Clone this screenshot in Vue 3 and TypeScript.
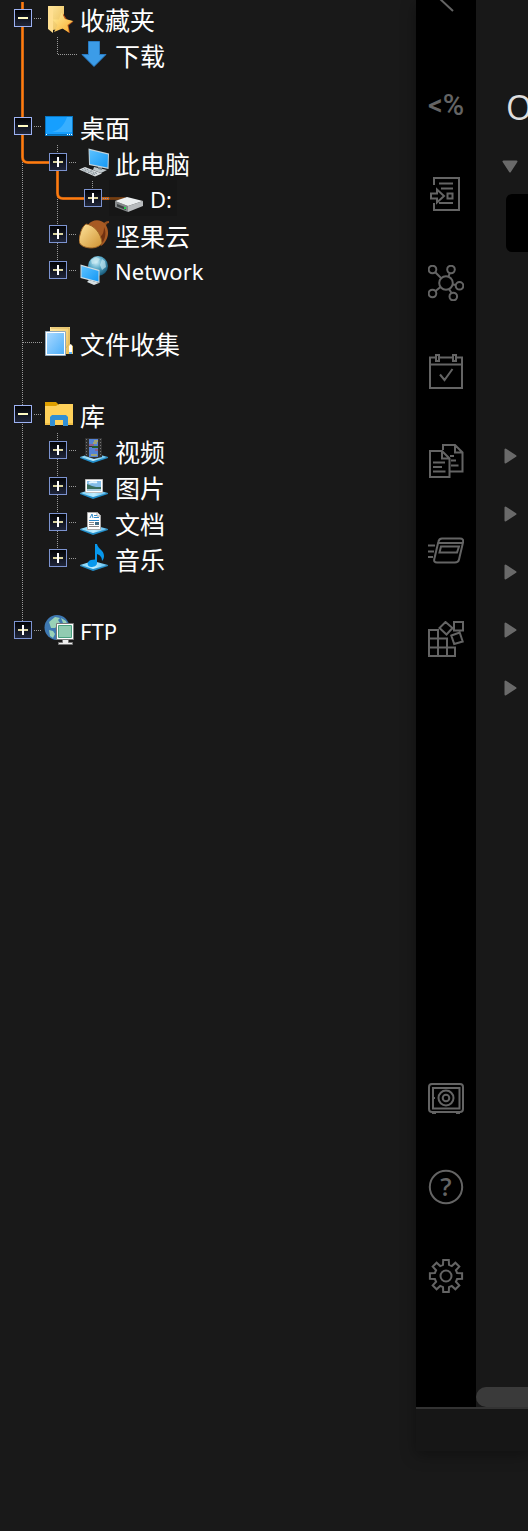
<script setup lang="ts">
interface TreeRow {
  label: string
  icon: string
  level: number
  state?: 'open' | 'closed'
  gap?: boolean
  selected?: boolean
  latin?: boolean
}

const rows: TreeRow[] = [
  { label: '收藏夹', icon: 'favorites', level: 0, state: 'open' },
  { label: '下载', icon: 'download', level: 1 },
  { label: '桌面', icon: 'desktop', level: 0, state: 'open', gap: true },
  { label: '此电脑', icon: 'computer', level: 1, state: 'closed' },
  { label: 'D:', icon: 'drive', level: 2, state: 'closed', selected: true, latin: true },
  { label: '坚果云', icon: 'acorn', level: 1, state: 'closed' },
  { label: 'Network', icon: 'network', level: 1, state: 'closed', latin: true },
  { label: '文件收集', icon: 'collection', level: 0, gap: true },
  { label: '库', icon: 'library', level: 0, state: 'open', gap: true },
  { label: '视频', icon: 'video', level: 1, state: 'closed' },
  { label: '图片', icon: 'picture', level: 1, state: 'closed' },
  { label: '文档', icon: 'document', level: 1, state: 'closed' },
  { label: '音乐', icon: 'music', level: 1, state: 'closed' },
  { label: 'FTP', icon: 'ftp', level: 0, state: 'closed', gap: true, latin: true },
]

const topTools = [
  { id: 'chevron', name: 'Collapse' },
  { id: 'snippet', name: 'Snippets' },
  { id: 'import', name: 'Import' },
  { id: 'graph', name: 'Graph' },
  { id: 'calendar', name: 'Daily note' },
  { id: 'templates', name: 'Templates' },
  { id: 'cards', name: 'Cards' },
  { id: 'blocks', name: 'Blocks' },
]
const bottomTools = [
  { id: 'vault', name: 'Vault' },
  { id: 'help', name: 'Help' },
  { id: 'gear', name: 'Settings' },
]

const gearPoints = (() => {
  const points: string[] = []
  for (let i = 0; i < 8; i++) {
    const mid = (i * Math.PI) / 4 - Math.PI / 2
    const corners: [number, number][] = [[11.5, -0.26], [16.3, -0.17], [16.3, 0.17], [11.5, 0.26]]
    for (const [r, a] of corners) {
      points.push(`${(18 + r * Math.cos(mid + a)).toFixed(1)},${(18 + r * Math.sin(mid + a)).toFixed(1)}`)
    }
  }
  return points.join(' ')
})()
</script>

<template>
  <svg class="defs" aria-hidden="true">
    <defs>
      <linearGradient id="g-folder" x1="0" y1="0" x2="1" y2="1"><stop offset="0" stop-color="#ffe7a0" /><stop offset="1" stop-color="#e9bd55" /></linearGradient>
      <linearGradient id="g-star" x1="0" y1="0" x2="1" y2="1"><stop offset="0" stop-color="#fff0a0" /><stop offset="1" stop-color="#f7ab2c" /></linearGradient>
      <linearGradient id="g-screen" x1="0" y1="0" x2="1" y2="1"><stop offset="0" stop-color="#5cc2ff" /><stop offset="1" stop-color="#1598f5" /></linearGradient>
      <linearGradient id="g-paper" x1="0" y1="0" x2="1" y2="1"><stop offset="0" stop-color="#a8d8ff" /><stop offset="1" stop-color="#4eb0fa" /></linearGradient>
      <linearGradient id="g-acorn" x1="0" y1="0" x2="1" y2="1"><stop offset="0" stop-color="#ffe49b" /><stop offset="1" stop-color="#cf9232" /></linearGradient>
      <radialGradient id="g-globe" cx=".4" cy=".3" r=".7"><stop offset="0" stop-color="#d4f2fb" /><stop offset=".5" stop-color="#58a9c8" /><stop offset="1" stop-color="#175979" /></radialGradient>
      <linearGradient id="g-base" x1="0" y1="0" x2="1" y2="0"><stop offset="0" stop-color="#72cdf6" /><stop offset=".5" stop-color="#c1eeff" /><stop offset="1" stop-color="#48b4ee" /></linearGradient>
    </defs>
    <symbol id="i-base" viewBox="0 0 30 30">
      <path d="M1 22v1l13 5 15-5v-1l-15 3z" fill="#218dc9" />
      <path d="M1 22l13-4 15 4-15 4z" fill="url(#g-base)" />
    </symbol>
    <symbol id="i-favorites" viewBox="0 0 30 30">
      <path d="M4 3h16v22l-11 2z" fill="url(#g-folder)" />
      <path d="M4 3l5 3v24l-5-4z" fill="#ffdf91" />
      <path d="M19 10.500l4 6 6.500 2-5 4 1.500 8-7-5z" fill="#b5521a" />
      <path d="M17.500 9.500l3.500 6.500 8 2-5.500 4 1.500 7.500-6.500-4L10 29l3.500-7-5-5.500h6.500z" fill="url(#g-star)" />
    </symbol>
    <symbol id="i-download" viewBox="0 0 30 30">
      <path d="M9.500 2.500h11v13h6.500l-12 12-12-12h6.500z" fill="#3c9ce8" stroke="#2a7cc4" />
    </symbol>
    <symbol id="i-desktop" viewBox="0 0 30 30">
      <rect x="1.500" y="5.500" width="27" height="19" fill="#169fff" stroke="#0877c4" />
      <path d="M28 6v15H8C17 19 21 12 23 6z" fill="#38afff" />
      <path d="M2 23.500h26" stroke="#0870b8" />
      <path d="M2 23.500h1M23 23.500h1M25 23.500h1M27 23.500h1" stroke="#fff" />
    </symbol>
    <symbol id="i-computer" viewBox="0 0 30 30">
      <path d="M15 20l9 2 4 1-6 3-8-3z" fill="#bfc8cc" />
      <path d="M19 18l4 1v4l-4-1z" fill="#78858b" />
      <path d="M9.500 1.500L30 6.500 29.500 22 10 18z" fill="#c5d2d9" />
      <path d="M10.500 3L29 7.500l-.5 13L11 17z" fill="url(#g-screen)" />
      <path d="M0 22.500l6-2.500 17 6.500-7 3z" fill="#d8dde0" />
      <path d="M3 22.500l14 5.500M5 21.500l14 5.500M5 24.500l5-3M9 26l5-3M13 27.500l5-3" stroke="#88949b" stroke-dasharray="2 1" fill="none" />
    </symbol>
    <symbol id="i-drive" viewBox="0 0 30 30">
      <path d="M1 18l13 5v6L1 24z" fill="#85898b" />
      <path d="M14 23l15-5v5l-15 6z" fill="#b8bbbd" />
      <path d="M1 18l12-4 16 4-15 5z" fill="#eceff0" />
      <path d="M3 21l9 3.500V27l-9-3.500z" fill="#3d4243" />
      <path d="M10 25h2" stroke="#24d34c" stroke-width="2" />
    </symbol>
    <symbol id="i-acorn" viewBox="0 0 30 30">
      <path d="M24 6c1-3 3-4 6-4v2c-2 0-3 1-3 4z" fill="#935020" />
      <path d="M9 6C13 0 22 0 26 5c5 6 4 16-4 22-4-9-5-16-13-21z" fill="#a75a23" />
      <path d="M25 8c3 6 1 13-3 18l-3-8c4 0 6-4 6-10z" fill="#713111" />
      <path d="M7 5c8 1 15 9 16 19-3 5-11 6-17 4-6-2-7-6-5-12C2 11 4 7 7 5z" fill="url(#g-acorn)" stroke="#9e6425" />
    </symbol>
    <symbol id="i-network" viewBox="0 0 30 30">
      <circle cx="19" cy="11" r="10" fill="url(#g-globe)" />
      <path d="M12 5l5-3 4 2-3 4-5 1zM23 4l3 2 1 6-4 3-2-5z" fill="#c9eaf1" opacity=".65" />
      <path d="M10 25l7 2 3 1-5 2-7-3z" fill="#d6dee1" />
      <path d="M1.500 9.500l19 5.500v13l-19-5z" fill="#d1dde2" />
      <path d="M2.500 11l17 5v10.500L2.500 22z" fill="url(#g-screen)" />
    </symbol>
    <symbol id="i-collection" viewBox="0 0 30 30">
      <path d="M6 0h20v17l3 2v8h-8L6 25z" fill="url(#g-folder)" />
      <path d="M7 1h18v16l-3 4" fill="none" stroke="#d9b55e" />
      <path d="M25 19l2-2 1 2v6h-3z" fill="#fff" /><path d="M25 25h3v2h-3z" fill="#5cb8ff" />
      <path d="M1.500 4.500h20v24h-20z" fill="#fff" stroke="#92aabd" />
      <path d="M3 6h17v21H3z" fill="url(#g-paper)" />
    </symbol>
    <symbol id="i-library" viewBox="0 0 30 30">
      <path d="M1 3h11l2 2v4H1z" fill="#dfa000" />
      <path d="M1 7h11l3-2h14v21H1z" fill="#ffd15a" />
      <path d="M6 26v-8l2-2h14l2 2v9h-5v-6h-8v6H6z" fill="#318fd5" />
      <path d="M1 25h5M24 25h5" stroke="#e1ad36" />
    </symbol>
    <symbol id="i-video" viewBox="0 0 30 30">
      <use href="#i-base" />
      <path d="M6 3h17v19l-8 2-9-3z" fill="#303030" />
      <path d="M10 4h9v7h-9zM10 12h9v10h-9z" fill="#5482d3" />
      <path d="M7.500 4v17M21.500 4v17" stroke="#777" stroke-dasharray="1 2" />
      <path d="M15 6h4M14 8h4M12 20h6" stroke="#e6c51d" stroke-width="1" />
      <path d="M10 10h5M16 15h3" stroke="#c74343" stroke-width="1" /><path d="M13 12h6" stroke="#275d28" stroke-width="2" />
    </symbol>
    <symbol id="i-picture" viewBox="0 0 30 30">
      <use href="#i-base" />
      <path d="M6.500 8.500h17v13h-17z" fill="#fff" stroke="#bbb" />
      <path d="M8 10h14v10H8z" fill="#83bce8" />
      <path d="M8 13l5 2 4 1h5v2H8z" fill="#396d5c" /><path d="M8 18h14v2H8z" fill="#a9ccdf" />
      <path d="M10 12c3-2 6 0 8-1" stroke="#e5f5ff" stroke-width="2" fill="none" />
    </symbol>
    <symbol id="i-document" viewBox="0 0 30 30">
      <use href="#i-base" />
      <path d="M8.500 5.500h10l3 3v14h-13z" fill="#fff" stroke="#aaa" />
      <path d="M18 5v4h4" fill="none" stroke="#aaa" />
      <path d="M11 11l2-4 1 4M15 8.500h3M15 10.500h5M10 13.500h10" stroke="#328bca" fill="none" />
      <path d="M10 15.500h5M10 17.500h5M10 19.500h10" stroke="#888" /><path d="M16 15h4v3h-4z" fill="#426b83" />
    </symbol>
    <symbol id="i-music" viewBox="0 0 30 30">
      <use href="#i-base" />
      <path d="M16 1h2c1 5 7 6 7 12 0 2-1 4-2 5 0-4-2-6-5-7v9c0 3-3 4-6 4-5-1-4-6 0-7l4-.5z" fill="#0798ed" />
    </symbol>
    <symbol id="i-ftp" viewBox="0 0 30 30">
      <circle cx="13" cy="12.500" r="12.500" fill="#3e78b2" />
      <path d="M5 7l6-5 5 1-2 2 2 3-5 5-4 0zM5 15l4 1 2 3-2 4-3-2zM17 3l5 3 2 5-5-3z" fill="#99d1b7" />
      <path d="M12.500 8.500h17v16h-17z" fill="#fff" stroke="#777" />
      <path d="M14.500 10.500h13v12h-13z" fill="#91cbb1" stroke="#4aa080" />
      <path d="M18.500 24.500h6v3h4v2h-14v-2h4z" fill="#eee" stroke="#777" />
    </symbol>

    <symbol id="t-chevron" viewBox="0 0 36 36"><path d="M11 0l14 13" /></symbol>
    <symbol id="t-import" viewBox="0 0 36 36">
      <path d="M6 9V2h25v32H6v-7M11 7.500h14M13 12.500h12M11 27h14M19.500 17.500h5v5h-5z" />
      <path d="M3 17.500h6v-4l7 6.500-7 6.500v-4H3z" />
    </symbol>
    <symbol id="t-graph" viewBox="0 0 36 36">
      <circle cx="18" cy="18" r="6.800" /><circle cx="4.500" cy="4.500" r="3.800" /><circle cx="23" cy="4.500" r="3.800" /><circle cx="31.500" cy="20.800" r="3.800" /><circle cx="25.300" cy="31.500" r="3.800" /><circle cx="4.500" cy="28.500" r="3.800" />
      <path d="M7.300 7.300L13 13M21.800 8l-1.300 3.500M25 19.500l3 .5M21 24l2.500 4M12.500 22l-5 4" />
    </symbol>
    <symbol id="t-calendar" viewBox="0 0 36 36">
      <path d="M7 3.500H2V34h32V3.500h-5M12 3.500h12M2 10.500h32M8 1h3v6H8zM25 1h3v6h-3zM12 20.500l4.500 5.500 8-11" />
    </symbol>
    <symbol id="t-templates" viewBox="0 0 36 36">
      <path d="M2 8h12l7.500 7.500V34H2zM14 8v7.500h7.500M5 19.500h12M5 24h9M5 28.500h12.500M15 7V2h12l7.500 7.500V28.500H22M27 2v7.500h7.500M22 13h4M23 17.500h5M23 22.500h7.500" />
    </symbol>
    <symbol id="t-cards" viewBox="0 0 36 36">
      <path d="M14 6.500h18q4 0 3 4l-4 17q-.7 3-4 3H9q-3.500 0-2.700-3.500l4-17q.7-3.500 3.700-3.500zM10 11h25M13 14.500h18l-2 6H11.500zM0 13.500h7M0 19.500h6M0 25h5" />
    </symbol>
    <symbol id="t-blocks" viewBox="0 0 36 36">
      <path d="M1 9h9v26H1zM1 17.500h18V35M1 26.500h26V35H1M10 17.500V35M26 1h9v8.500h-9zM17.500 1l7 6-6 6.500-7-6.500zM23.300 14.500l8.400-3 3 9-8.500 2.500z" />
    </symbol>
    <symbol id="t-vault" viewBox="0 0 36 36">
      <rect x="1" y="4" width="34" height="28" rx="3" /><path d="M5 8h26.500v20.500H5zM4 18h3M4 33h4M28 33h4" />
      <circle cx="18" cy="18" r="7.500" /><circle cx="18" cy="18" r="3.300" />
    </symbol>
    <symbol id="t-help" viewBox="0 0 36 36"><circle cx="18" cy="18" r="16.200" /></symbol>
    <symbol id="t-gear" viewBox="0 0 36 36"><polygon :points="gearPoints" /><circle cx="18" cy="18" r="5.500" /></symbol>
  </svg>

  <div class="page">
    <nav class="tree" aria-label="Folders">
      <svg class="lines" width="130" height="660" aria-hidden="true">
        <path class="dots" d="M22.500 28V630M57.500 37V54M58 54.500H77M57.500 145V270M92.500 181V190M23 342.500H42M57.500 433V558M34 18.500h8M34 126.500h8M69 162.500h8M69 234.500h8M69 270.500h8M34 414.500h8M69 450.500h8M69 486.500h8M69 522.500h8M69 558.500h8M34 630.500h8" />
        <g class="halo">
          <path d="M22.500 2V157q0 5.500 5.500 5.500H50" /><path d="M57.500 170v23q0 5.500 5.500 5.500h21" /><path d="M102 198.500h23" />
        </g>
        <g class="trail">
          <path d="M22.500 2V157q0 5.500 5.500 5.500H50" /><path d="M57.500 170v23q0 5.500 5.500 5.500h21" /><path class="dim" d="M102 198.500h23" />
        </g>
        <path class="link" d="M103 198.500h8" />
      </svg>
      <ul class="rows">
        <li v-for="row in rows" :key="row.label" class="row" :class="['level-' + row.level, { gap: row.gap }]">
          <span class="slot">
            <button v-if="row.state" type="button" class="toggle" :class="row.state" :aria-label="row.label" :aria-expanded="row.state === 'open'"></button>
          </span>
          <a href="#" class="item" :class="{ selected: row.selected, latin: row.latin }">
            <svg class="icon" viewBox="0 0 30 30" aria-hidden="true"><use :href="'#i-' + row.icon" /></svg>
            <span class="label">{{ row.label }}</span>
          </a>
        </li>
      </ul>
    </nav>

    <section class="window">
      <div class="body">
        <aside class="tools">
          <div class="group">
            <button v-for="t in topTools" :key="t.id" type="button" class="tool" :aria-label="t.name">
              <span v-if="t.id === 'snippet'" class="snippet">&lt;%</span>
              <svg v-else class="tool-icon" viewBox="0 0 36 36"><use :href="'#t-' + t.id" /></svg>
            </button>
          </div>
          <div class="group">
            <button v-for="t in bottomTools" :key="t.id" type="button" class="tool" :aria-label="t.name">
              <svg class="tool-icon" viewBox="0 0 36 36">
                <use :href="'#t-' + t.id" />
                <text v-if="t.id === 'help'" class="mark" x="18" y="27" text-anchor="middle">?</text>
              </svg>
            </button>
          </div>
        </aside>
        <main class="content">
          <h1>O</h1>
          <button type="button" class="fold" aria-label="Collapse section">
            <svg width="16" height="16" viewBox="0 0 16 16"><path d="M1.500 3.500h13L8 13.500z" /></svg>
          </button>
          <div class="block"></div>
          <button v-for="n in 5" :key="n" type="button" class="fold" :aria-label="'Expand section ' + n">
            <svg width="16" height="16" viewBox="0 0 16 16"><path d="M3.500 1.500v13l10-6.500z" /></svg>
          </button>
          <div class="scroll"></div>
        </main>
      </div>
      <footer class="status"></footer>
    </section>
  </div>
</template>

<style>
body {
  margin: 0;
  background: #191919;
}
</style>

<style scoped>
.defs {
  position: absolute;
  width: 0;
  height: 0;
}
.page {
  display: flex;
  align-items: flex-start;
  min-height: 100vh;
  overflow: hidden;
  background: #191919;
}
button {
  margin: 0;
  padding: 0;
  border: 0;
  background: none;
}
.tree {
  position: relative;
  flex: 1;
  min-width: 0;
}
.lines {
  position: absolute;
  left: 0;
  top: 0;
  fill: none;
}
.trail {
  stroke: #ff7d0c;
  stroke-width: 2;
}
.halo {
  stroke: #a3501c;
  stroke-width: 3;
}
.trail .dim {
  stroke: #d86a08;
}
.dots,
.link {
  stroke: #9a9a9a;
  stroke-dasharray: 1 1;
}
.link {
  stroke: #7d8fc4;
}
.rows {
  position: relative;
  margin: 0;
  padding: 0;
  list-style: none;
}
.row {
  display: flex;
  align-items: center;
  height: 36px;
  padding-left: 14px;
}
.row.gap {
  margin-top: 36px;
}
.level-1 {
  padding-left: 49px;
}
.level-2 {
  padding-left: 84px;
}
.slot {
  display: flex;
  width: 18px;
  margin-right: 7px;
}
.toggle {
  position: relative;
  width: 18px;
  height: 18px;
  border: 1px solid #7c93d0;
  background: linear-gradient(#030406, #20263a);
}
.toggle.open {
  border-color: #9db2f3;
}
.toggle::before,
.toggle.closed::after {
  content: "";
  position: absolute;
  left: 3px;
  top: 7px;
  width: 10px;
  height: 2px;
  background: #fffbc4;
}
.toggle.closed::before {
  background: #d9d3a0;
}
.toggle.closed::after {
  left: 7px;
  top: 3px;
  width: 2px;
  height: 10px;
  background: #fff;
}
.item {
  display: flex;
  align-items: center;
  gap: 6px;
  height: 36px;
  padding: 0 5px;
  color: #fff;
  font-family: "Noto Sans CJK SC", sans-serif;
  font-size: 25px;
  text-decoration: none;
  white-space: nowrap;
}
.latin {
  font-family: "Noto Sans", sans-serif;
  font-size: 22px;
}
.label {
  padding-top: 2px;
  line-height: 36px;
}
.selected {
  background: rgba(20, 20, 20, 0.5);
}
.icon {
  flex: none;
  width: 30px;
  height: 30px;
}
.window {
  display: flex;
  flex: 0 0 112px;
  flex-direction: column;
  min-width: 0;
  height: calc(100vh - 80px);
  background: #171717;
  box-shadow: 0 4px 14px rgba(0, 0, 0, 0.35);
}
.body {
  display: flex;
  flex: 1;
  min-width: 0;
  min-height: 0;
}
.tools {
  display: flex;
  flex: 0 0 60px;
  flex-direction: column;
  justify-content: space-between;
  overflow: hidden;
  background: #000;
}
.group {
  display: flex;
  flex-direction: column;
}
.group:first-child {
  margin-top: -29px;
}
.group:last-child {
  margin-bottom: 87px;
}
.tool {
  display: flex;
  align-items: center;
  justify-content: center;
  height: 89px;
  color: #646464;
}
.tool-icon {
  width: 36px;
  height: 36px;
  overflow: visible;
  fill: none;
  stroke: #646464;
  stroke-width: 2;
}
.snippet {
  font: 500 29px/36px Roboto, sans-serif;
}
.mark {
  fill: #646464;
  stroke: none;
  font: 600 25px "Open Sans", sans-serif;
}
.content {
  position: relative;
  flex: 1;
  min-width: 0;
  overflow: hidden;
  background: #181818;
}
h1 {
  margin: 77px 0 0;
  padding-left: 30px;
  color: #dedede;
  font: 400 34px/60px "Open Sans", sans-serif;
}
.fold {
  display: flex;
  align-items: center;
  width: 100%;
  height: 58px;
  padding-left: 26px;
}
.fold svg {
  flex: none;
  fill: #6a6a6a;
  stroke: #6a6a6a;
  stroke-width: 2;
  stroke-linejoin: round;
}
.block {
  height: 58px;
  margin: -1px 0 175px 30px;
  border-radius: 6px 0 0 6px;
  background: #000;
}
.scroll {
  position: absolute;
  right: 0;
  bottom: 0;
  left: 0;
  height: 20px;
  border-radius: 10px 0 0 10px;
  background: #3a3a3a;
}
.status {
  height: 42px;
  border-top: 2px solid #333;
  background: #161616;
}
</style>
